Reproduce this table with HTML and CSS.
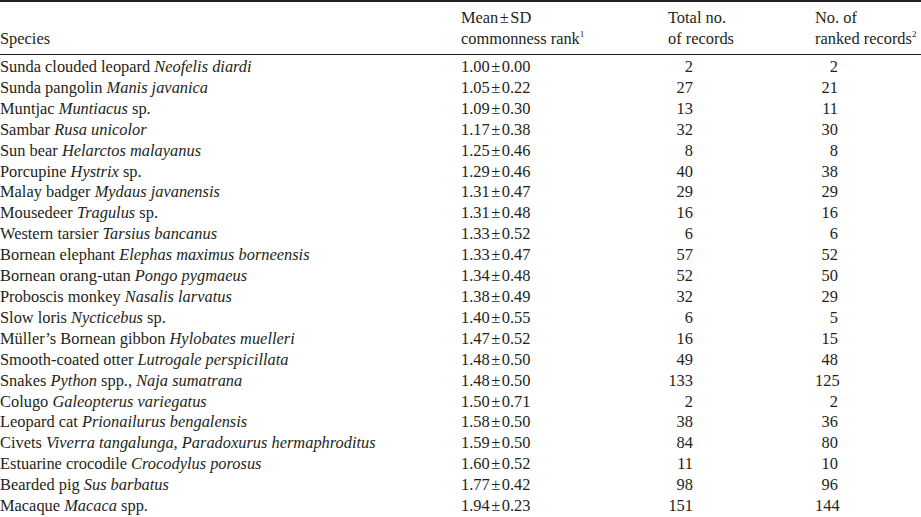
FILE: index.html
```html
<!DOCTYPE html>
<html>
<head>
<meta charset="utf-8">
<link rel="stylesheet" href="styles.css">
</head>
<body>
<table class="data">
  <colgroup>
    <col class="c-species">
    <col class="c-mean">
    <col class="c-total">
    <col class="c-ranked">
  </colgroup>
  <thead>
    <tr>
      <th>Species</th>
      <th>Mean<span class="pm">±</span>SD<br>commonness rank<sup>1</sup></th>
      <th>Total no.<br>of records</th>
      <th>No. of<br>ranked records<sup>2</sup></th>
    </tr>
  </thead>
  <tbody>
    <tr><td>Sunda clouded leopard <i>Neofelis diardi</i></td><td>1.00<span class="pm">±</span>0.00</td><td class="n3">2</td><td class="n4">2</td></tr>
    <tr><td>Sunda pangolin <i>Manis javanica</i></td><td>1.05<span class="pm">±</span>0.22</td><td class="n3">27</td><td class="n4">21</td></tr>
    <tr><td>Muntjac <i>Muntiacus</i> sp.</td><td>1.09<span class="pm">±</span>0.30</td><td class="n3">13</td><td class="n4">11</td></tr>
    <tr><td>Sambar <i>Rusa unicolor</i></td><td>1.17<span class="pm">±</span>0.38</td><td class="n3">32</td><td class="n4">30</td></tr>
    <tr><td>Sun bear <i>Helarctos malayanus</i></td><td>1.25<span class="pm">±</span>0.46</td><td class="n3">8</td><td class="n4">8</td></tr>
    <tr><td>Porcupine <i>Hystrix</i> sp.</td><td>1.29<span class="pm">±</span>0.46</td><td class="n3">40</td><td class="n4">38</td></tr>
    <tr><td>Malay badger <i>Mydaus javanensis</i></td><td>1.31<span class="pm">±</span>0.47</td><td class="n3">29</td><td class="n4">29</td></tr>
    <tr><td>Mousedeer <i>Tragulus</i> sp.</td><td>1.31<span class="pm">±</span>0.48</td><td class="n3">16</td><td class="n4">16</td></tr>
    <tr><td>Western tarsier <i>Tarsius bancanus</i></td><td>1.33<span class="pm">±</span>0.52</td><td class="n3">6</td><td class="n4">6</td></tr>
    <tr><td>Bornean elephant <i>Elephas maximus borneensis</i></td><td>1.33<span class="pm">±</span>0.47</td><td class="n3">57</td><td class="n4">52</td></tr>
    <tr><td>Bornean orang-utan <i>Pongo pygmaeus</i></td><td>1.34<span class="pm">±</span>0.48</td><td class="n3">52</td><td class="n4">50</td></tr>
    <tr><td>Proboscis monkey <i>Nasalis larvatus</i></td><td>1.38<span class="pm">±</span>0.49</td><td class="n3">32</td><td class="n4">29</td></tr>
    <tr><td>Slow loris <i>Nycticebus</i> sp.</td><td>1.40<span class="pm">±</span>0.55</td><td class="n3">6</td><td class="n4">5</td></tr>
    <tr><td>Müller’s Bornean gibbon <i>Hylobates muelleri</i></td><td>1.47<span class="pm">±</span>0.52</td><td class="n3">16</td><td class="n4">15</td></tr>
    <tr><td>Smooth-coated otter <i>Lutrogale perspicillata</i></td><td>1.48<span class="pm">±</span>0.50</td><td class="n3">49</td><td class="n4">48</td></tr>
    <tr><td>Snakes <i>Python</i> spp., <i>Naja sumatrana</i></td><td>1.48<span class="pm">±</span>0.50</td><td class="n3">133</td><td class="n4">125</td></tr>
    <tr><td>Colugo <i>Galeopterus variegatus</i></td><td>1.50<span class="pm">±</span>0.71</td><td class="n3">2</td><td class="n4">2</td></tr>
    <tr><td>Leopard cat <i>Prionailurus bengalensis</i></td><td>1.58<span class="pm">±</span>0.50</td><td class="n3">38</td><td class="n4">36</td></tr>
    <tr><td>Civets <i>Viverra tangalunga, Paradoxurus hermaphroditus</i></td><td>1.59<span class="pm">±</span>0.50</td><td class="n3">84</td><td class="n4">80</td></tr>
    <tr><td>Estuarine crocodile <i>Crocodylus porosus</i></td><td>1.60<span class="pm">±</span>0.52</td><td class="n3">11</td><td class="n4">10</td></tr>
    <tr><td>Bearded pig <i>Sus barbatus</i></td><td>1.77<span class="pm">±</span>0.42</td><td class="n3">98</td><td class="n4">96</td></tr>
    <tr><td>Macaque <i>Macaca</i> spp.</td><td>1.94<span class="pm">±</span>0.23</td><td class="n3">151</td><td class="n4">144</td></tr>
  </tbody>
</table>
</body>
</html>
```
FILE: styles.css
```css
html, body {
  margin: 0;
  padding: 0;
  background: #fff;
}
body {
  font-family: "Liberation Serif", "Times New Roman", serif;
  font-size: 16.4px;
  color: #231f20;
}
.data {
  width: 921px;
  border-collapse: collapse;
  table-layout: fixed;
  border-top: 2px solid #231f20;
  border-bottom: 1px solid #231f20;
}
.c-species { width: 461px; }
.c-mean { width: 207px; }
.c-total { width: 147px; }
.c-ranked { width: 106px; }
.data th {
  font-weight: normal;
  text-align: left;
  vertical-align: bottom;
  line-height: 21px;
  padding: 5px 0 5px 0;
  border-bottom: 1px solid #231f20;
}
.data sup {
  font-size: 9px;
  line-height: 0;
  vertical-align: 7px;
}
.pm {
  margin: 0 1.5px;
}
.data tbody tr:first-child td { padding-top: 2px; }
.data td {
  padding: 0;
  line-height: 20.9px;
  white-space: nowrap;
}
.data td.n3 { text-align: right; padding-right: 122px; }
.data td.n4 { text-align: right; padding-right: 83px; }
```
